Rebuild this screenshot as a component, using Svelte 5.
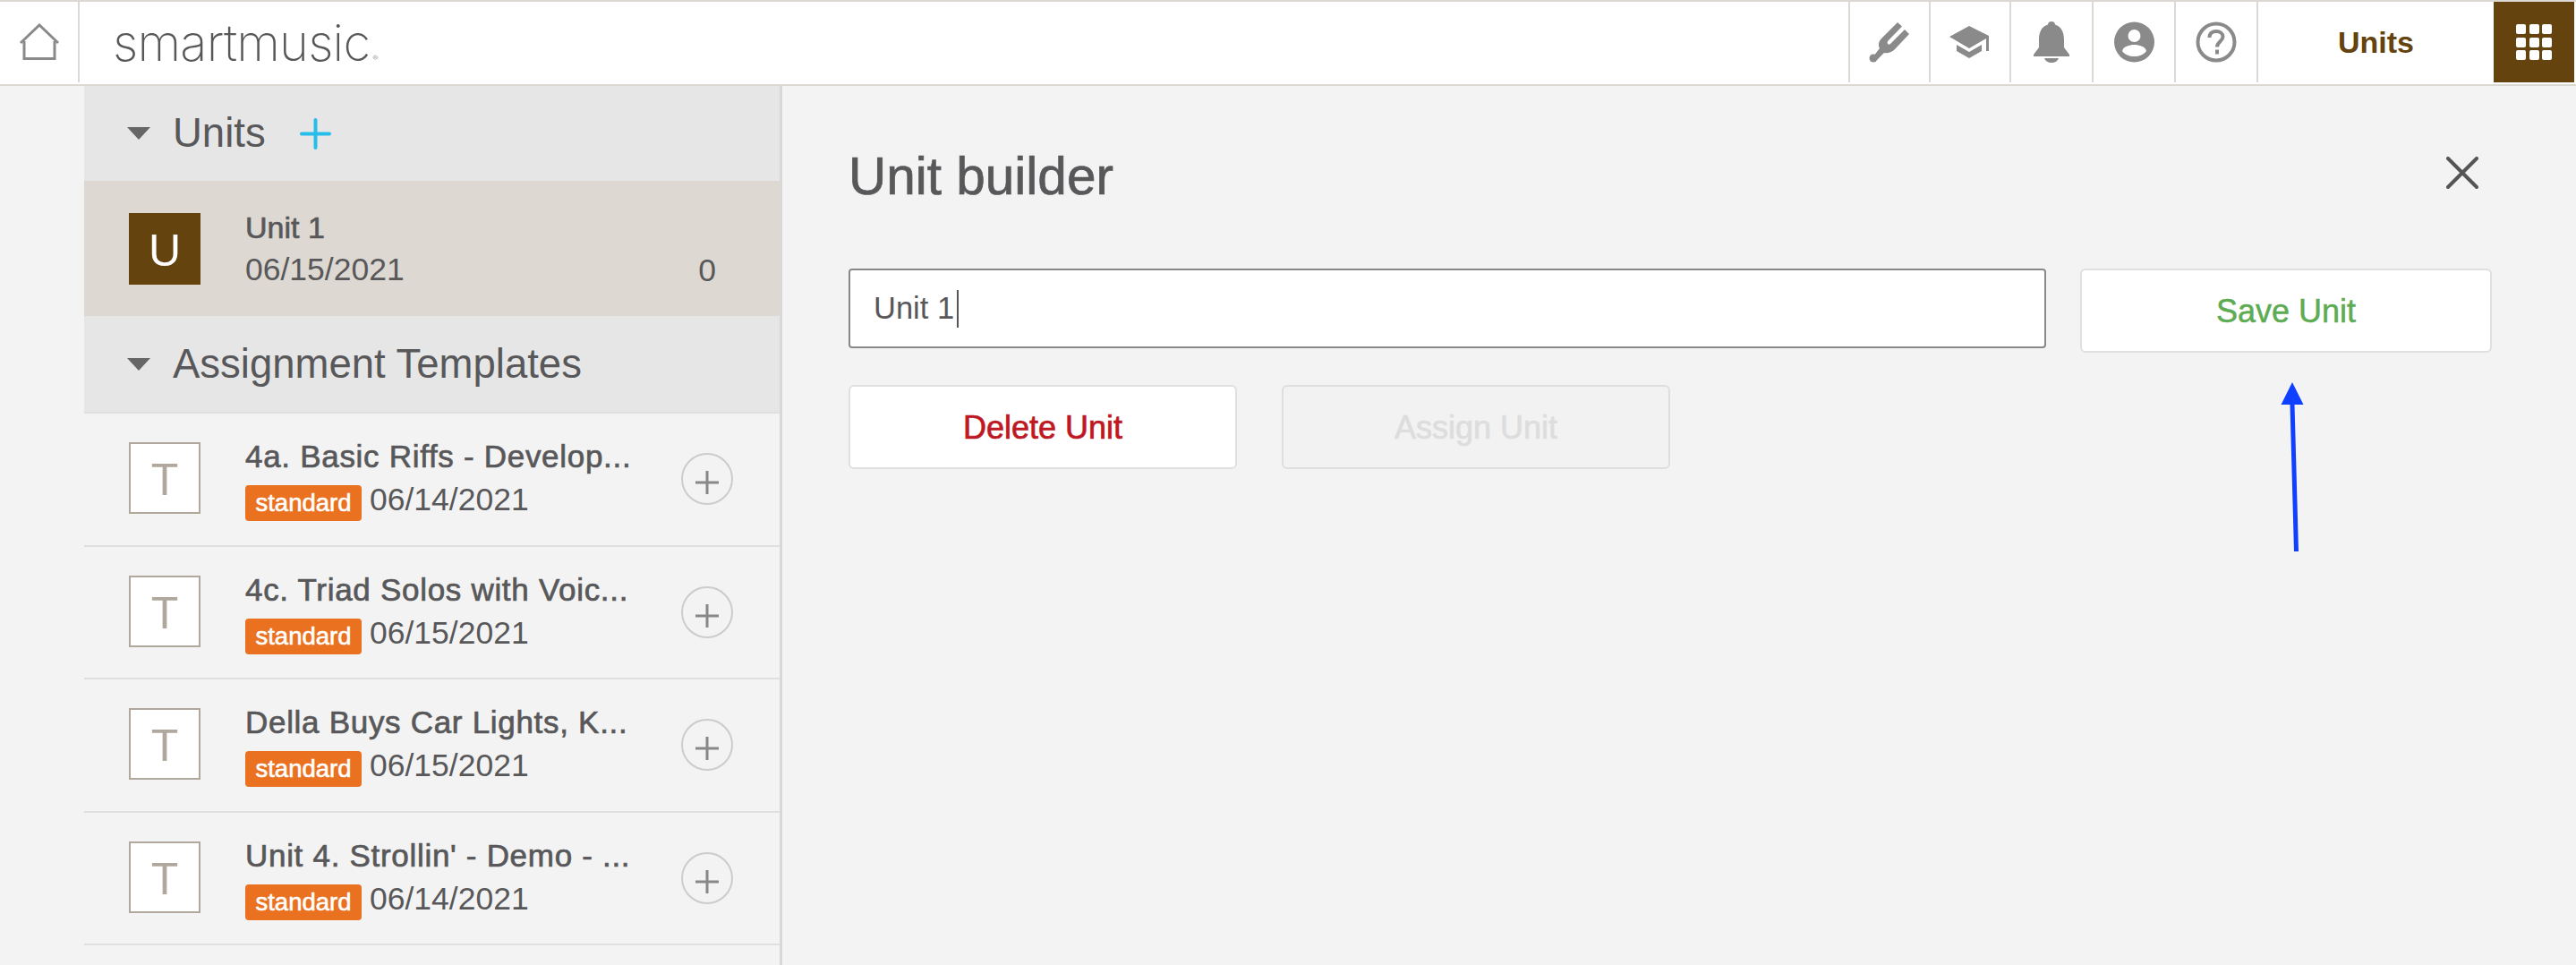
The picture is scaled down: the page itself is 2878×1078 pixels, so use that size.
<script>
  const templates = [
    { title: "4a. Basic Riffs - Develop...", date: "06/14/2021" },
    { title: "4c. Triad Solos with Voic...", date: "06/15/2021" },
    { title: "Della Buys Car Lights, K...", date: "06/15/2021" },
    { title: "Unit 4. Strollin' - Demo - ...", date: "06/14/2021" }
  ];
  const tools = ["fork", "hat", "bell", "person", "help"];
</script>

<div class="page">
  <header class="topbar">
    <div class="home">
      <svg width="46" height="42" viewBox="0 0 46 42" fill="none" stroke="#8a8a8a" stroke-width="3">
        <path d="M2 22 L23 2 L44 22"></path>
        <path d="M6 20 V39.500 H40 V20"></path>
      </svg>
    </div>
    <div class="logo">smartmusic<span class="reg">®</span></div>
    <div class="tools">
      {#each tools as tool}
        <div class="tool">
          {#if tool === "fork"}
            <svg width="46" height="46" viewBox="0 0 46 46" fill="#8a8a8a">
              <path d="M32 1 L37 5.500 L21.500 21.500 C19.500 24 21.500 27 24 25 L40 9 L45 14 L29 31 C25 35 20 36 17 35 L9 43 L5 39 L12 30 C10 26 11 22 14 19 Z"></path>
              <circle cx="5" cy="41" r="4.500"></circle>
            </svg>
          {:else if tool === "hat"}
            <svg width="46" height="36" viewBox="0 0 46 36" fill="#8a8a8a">
              <path d="M22 0 L44 11 V28 H41 V14 L22 25 L0 12 Z"></path>
              <path d="M8 21 L22 29 L36 21 V28 L22 36 L8 28 Z"></path>
            </svg>
          {:else if tool === "bell"}
            <svg width="40" height="46" viewBox="0 0 40 46" fill="#8a8a8a">
              <circle cx="20" cy="4" r="4"></circle>
              <path d="M20 3 C30 3 34 11 34 20 V29 L40 37 V39 H0 V37 L6 29 V20 C6 11 10 3 20 3 Z"></path>
              <path d="M12 41 H28 C27 44 24 46 20 46 C16 46 13 44 12 41 Z"></path>
            </svg>
          {:else if tool === "person"}
            <svg width="45" height="46" viewBox="0 0 45 46">
              <circle cx="22.500" cy="23" r="22.500" fill="#8a8a8a"></circle>
              <circle cx="22.500" cy="16" r="7" fill="#fff"></circle>
              <path d="M9 33 C10 28 17 26 22.500 26 C28 26 35 28 36 33 C33 37 28 39 22.500 39 C17 39 12 37 9 33 Z" fill="#fff"></path>
            </svg>
          {:else}
            <svg width="46" height="46" viewBox="0 0 46 46" fill="none" stroke="#8a8a8a">
              <circle cx="23" cy="23" r="20.500" stroke-width="4"></circle>
              <path d="M15.500 18 C15.500 13 19 11 23 11 C27.500 11 30.500 13.500 30.500 17 C30.500 22 24 22.500 24 28.500" stroke-width="4"></path>
              <path d="M24 31.500 V36.500" stroke-width="4"></path>
            </svg>
          {/if}
        </div>
      {/each}
      <div class="section-name">Units</div>
      <div class="apps">
        <div class="apps-grid">
          {#each Array(9) as _}
            <span></span>
          {/each}
        </div>
      </div>
    </div>
  </header>

  <main class="main">
    <aside class="sidebar">
      <div class="group-head units-head">
        <span class="tri"></span>
        <span class="group-title">Units</span>
        <svg class="add" width="35" height="35" viewBox="0 0 35 35" stroke="#27bdea" stroke-width="4" stroke-linecap="round">
          <path d="M17.500 2 V33 M2 17.500 H33"></path>
        </svg>
      </div>
      <div class="unit-row">
        <div class="thumb filled">U</div>
        <div class="info">
          <div class="name unit-name">Unit 1</div>
          <div class="date unit-date">06/15/2021</div>
        </div>
        <div class="count">0</div>
      </div>
      <div class="group-head templates-head">
        <span class="tri"></span>
        <span class="group-title">Assignment Templates</span>
      </div>
      {#each templates as t}
        <div class="template-row">
          <div class="thumb">T</div>
          <div class="info">
            <div class="name">{t.title}</div>
            <div class="meta">
              <span class="badge">standard</span>
              <span class="date">{t.date}</span>
            </div>
          </div>
          <div class="circle-add">
            <svg width="26" height="26" viewBox="0 0 26 26" stroke="#888" stroke-width="3">
              <path d="M13 0 V26 M0 13 H26"></path>
            </svg>
          </div>
        </div>
      {/each}
    </aside>

    <section class="builder">
      <div class="builder-head">
        <h1>Unit builder</h1>
        <svg width="36" height="36" viewBox="0 0 36 36" stroke="#555" stroke-width="4" stroke-linecap="round">
          <path d="M2 2 L34 34 M34 2 L2 34"></path>
        </svg>
      </div>
      <div class="name-row">
        <div class="input">Unit 1<span class="caret"></span></div>
        <button class="btn save">Save Unit</button>
      </div>
      <div class="action-row">
        <button class="btn delete">Delete Unit</button>
        <button class="btn assign">Assign Unit</button>
      </div>
    </section>
  </main>

  <!-- annotation drawn over the screenshot -->
  <svg class="arrow" width="40" height="200" viewBox="0 0 40 200">
    <path d="M19 25 L23.500 189" stroke="#0f3fff" stroke-width="5" fill="none"></path>
    <path d="M19 0 L6.500 25 L31.500 25 Z" fill="#0f3fff"></path>
  </svg>
</div>

<style>
  :global(body) {
    margin: 0;
    background: #f2f2f2;
  }

  .page {
    position: relative;
    width: 2878px;
    height: 1078px;
    overflow: hidden;
    background: #f3f3f3;
    color: #58585a;
    font-family: "Liberation Sans", Arial, sans-serif;
  }

  .topbar {
    display: flex;
    align-items: stretch;
    height: 96px;
    box-sizing: border-box;
    background: #fff;
    border-top: 2px solid #dcd8d3;
    border-bottom: 2px solid #dcd8d3;
  }

  .home {
    width: 87px;
    height: 90px;
    display: flex;
    align-items: center;
    justify-content: center;
    border-right: 2px solid #dcd8d3;
  }

  .logo {
    margin-left: 37px;
    font-family: Inter, sans-serif;
    font-weight: 200;
    font-size: 56px;
    line-height: 92px;
    letter-spacing: -0.800px;
    color: #58585a;
  }

  .reg {
    font-size: 9px;
    letter-spacing: 0;
    margin-left: 3px;
  }

  .tools {
    margin-left: auto;
    display: flex;
    height: 90px;
  }

  .tool {
    width: 92px;
    box-sizing: border-box;
    display: flex;
    align-items: center;
    justify-content: center;
    border-left: 2px solid #dcd8d3;
  }

  .tool:nth-child(-n + 2) {
    width: 90px;
  }

  .section-name {
    width: 265px;
    box-sizing: border-box;
    border-left: 2px solid #dcd8d3;
    text-align: center;
    font-weight: 700;
    font-size: 34px;
    line-height: 90px;
    color: #64430f;
  }

  .apps {
    width: 90px;
    margin-right: 2px;
    background: #64430f;
    display: flex;
    align-items: center;
    justify-content: center;
  }

  .apps-grid {
    display: grid;
    grid-template-columns: repeat(3, 11px);
    grid-auto-rows: 11px;
    gap: 3.500px;
  }

  .apps-grid span {
    background: #fff;
    border-radius: 2px;
  }

  .main {
    display: flex;
    height: 982px;
  }

  .sidebar {
    width: 780px;
    margin-left: 94px;
    box-sizing: border-box;
    border-right: 3px solid #d8d8d8;
    flex: none;
  }

  .group-head {
    display: flex;
    align-items: center;
    background: #e6e6e6;
    padding-left: 48px;
  }

  .units-head {
    height: 106px;
  }

  .templates-head {
    height: 109px;
    box-sizing: border-box;
    border-bottom: 2px solid #dfdfdf;
  }

  .tri {
    width: 0;
    height: 0;
    border-left: 13px solid transparent;
    border-right: 13px solid transparent;
    border-top: 14px solid #666;
    margin-right: 25px;
  }

  .group-title {
    font-size: 45.500px;
    line-height: 50px;
  }

  .add {
    margin-left: 38px;
  }

  .unit-row {
    display: flex;
    height: 151px;
    box-sizing: border-box;
    padding: 36px 0 0 50px;
    background: #ddd8d1;
  }

  .template-row {
    display: flex;
    height: 148.600px;
    box-sizing: border-box;
    padding: 32px 0 0 50px;
    border-bottom: 2px solid #dfdfdf;
  }

  .thumb {
    flex: none;
    width: 80px;
    height: 80px;
    box-sizing: border-box;
    border: 2px solid #b0a89c;
    background: #fff;
    color: #b0a89c;
    font-size: 50px;
    line-height: 80px;
    text-align: center;
  }

  .thumb.filled {
    background: #64430f;
    border-color: #64430f;
    color: #fff;
  }

  .info {
    margin-left: 50px;
    min-width: 0;
  }

  .name,
  .btn,
  h1 {
    -webkit-text-stroke: 0.700px currentColor;
  }

  .name {
    margin-top: -4px;
    font-size: 35px;
    line-height: 40px;
    letter-spacing: 0.700px;
    white-space: nowrap;
  }

  .unit-name {
    font-size: 34px;
    letter-spacing: 0;
  }

  .date {
    font-size: 35.500px;
    line-height: 40px;
  }

  .unit-date {
    margin-top: 7px;
  }

  .meta {
    display: flex;
    align-items: flex-start;
    margin-top: 12px;
  }

  .meta .date {
    margin-top: -4px;
  }

  .badge {
    width: 130px;
    height: 40px;
    border-radius: 4px;
    margin-right: 9px;
    background: #e97120;
    color: #fff;
    text-align: center;
    font-size: 27.500px;
    line-height: 40px;
    -webkit-text-stroke: 0.600px #fff;
  }

  .count {
    margin-left: auto;
    margin-right: 71px;
    margin-top: 44px;
    font-size: 35.500px;
    line-height: 40px;
  }

  .circle-add {
    margin: 12px 52px 0 auto;
    width: 58px;
    height: 58px;
    box-sizing: border-box;
    border: 2px solid #ccc;
    border-radius: 50%;
    display: flex;
    align-items: center;
    justify-content: center;
    flex: none;
  }

  .circle-add svg {
    margin-top: 8px;
  }

  .builder {
    flex: 1;
    padding: 0 94px 0 74px;
  }

  .builder-head {
    height: 204px;
    display: flex;
    justify-content: space-between;
    align-items: flex-start;
    padding-right: 15px;
  }

  .builder-head svg {
    margin-top: 79px;
  }

  h1 {
    margin: 69px 0 0;
    font-size: 58.500px;
    line-height: 64px;
    font-weight: 400;
  }

  .name-row {
    display: flex;
    align-items: flex-start;
    gap: 38px;
  }

  .input {
    flex: 1;
    height: 89px;
    box-sizing: border-box;
    border: 2px solid #888;
    border-radius: 4px;
    background: #fff;
    padding-left: 26px;
    display: flex;
    align-items: center;
    font-size: 34.500px;
  }

  .caret {
    width: 2px;
    height: 42px;
    margin-left: 3px;
    background: #555;
  }

  .btn {
    height: 94px;
    box-sizing: border-box;
    border: 2px solid #e0e0e0;
    border-radius: 6px;
    background: #fff;
    font-family: inherit;
    font-size: 36px;
    padding: 2px 0 0;
  }

  .save {
    width: 460px;
    color: #5dab52;
    -webkit-text-stroke-width: 0.500px;
  }

  .action-row {
    display: flex;
    gap: 50px;
    margin-top: 36px;
  }

  .delete,
  .assign {
    width: 434px;
  }

  .delete {
    color: #be1823;
  }

  .assign {
    background: #f2f2f2;
    border-color: #dedede;
    color: #dddddd;
  }

  .arrow {
    position: absolute;
    left: 2542px;
    top: 427px;
  }
</style>
